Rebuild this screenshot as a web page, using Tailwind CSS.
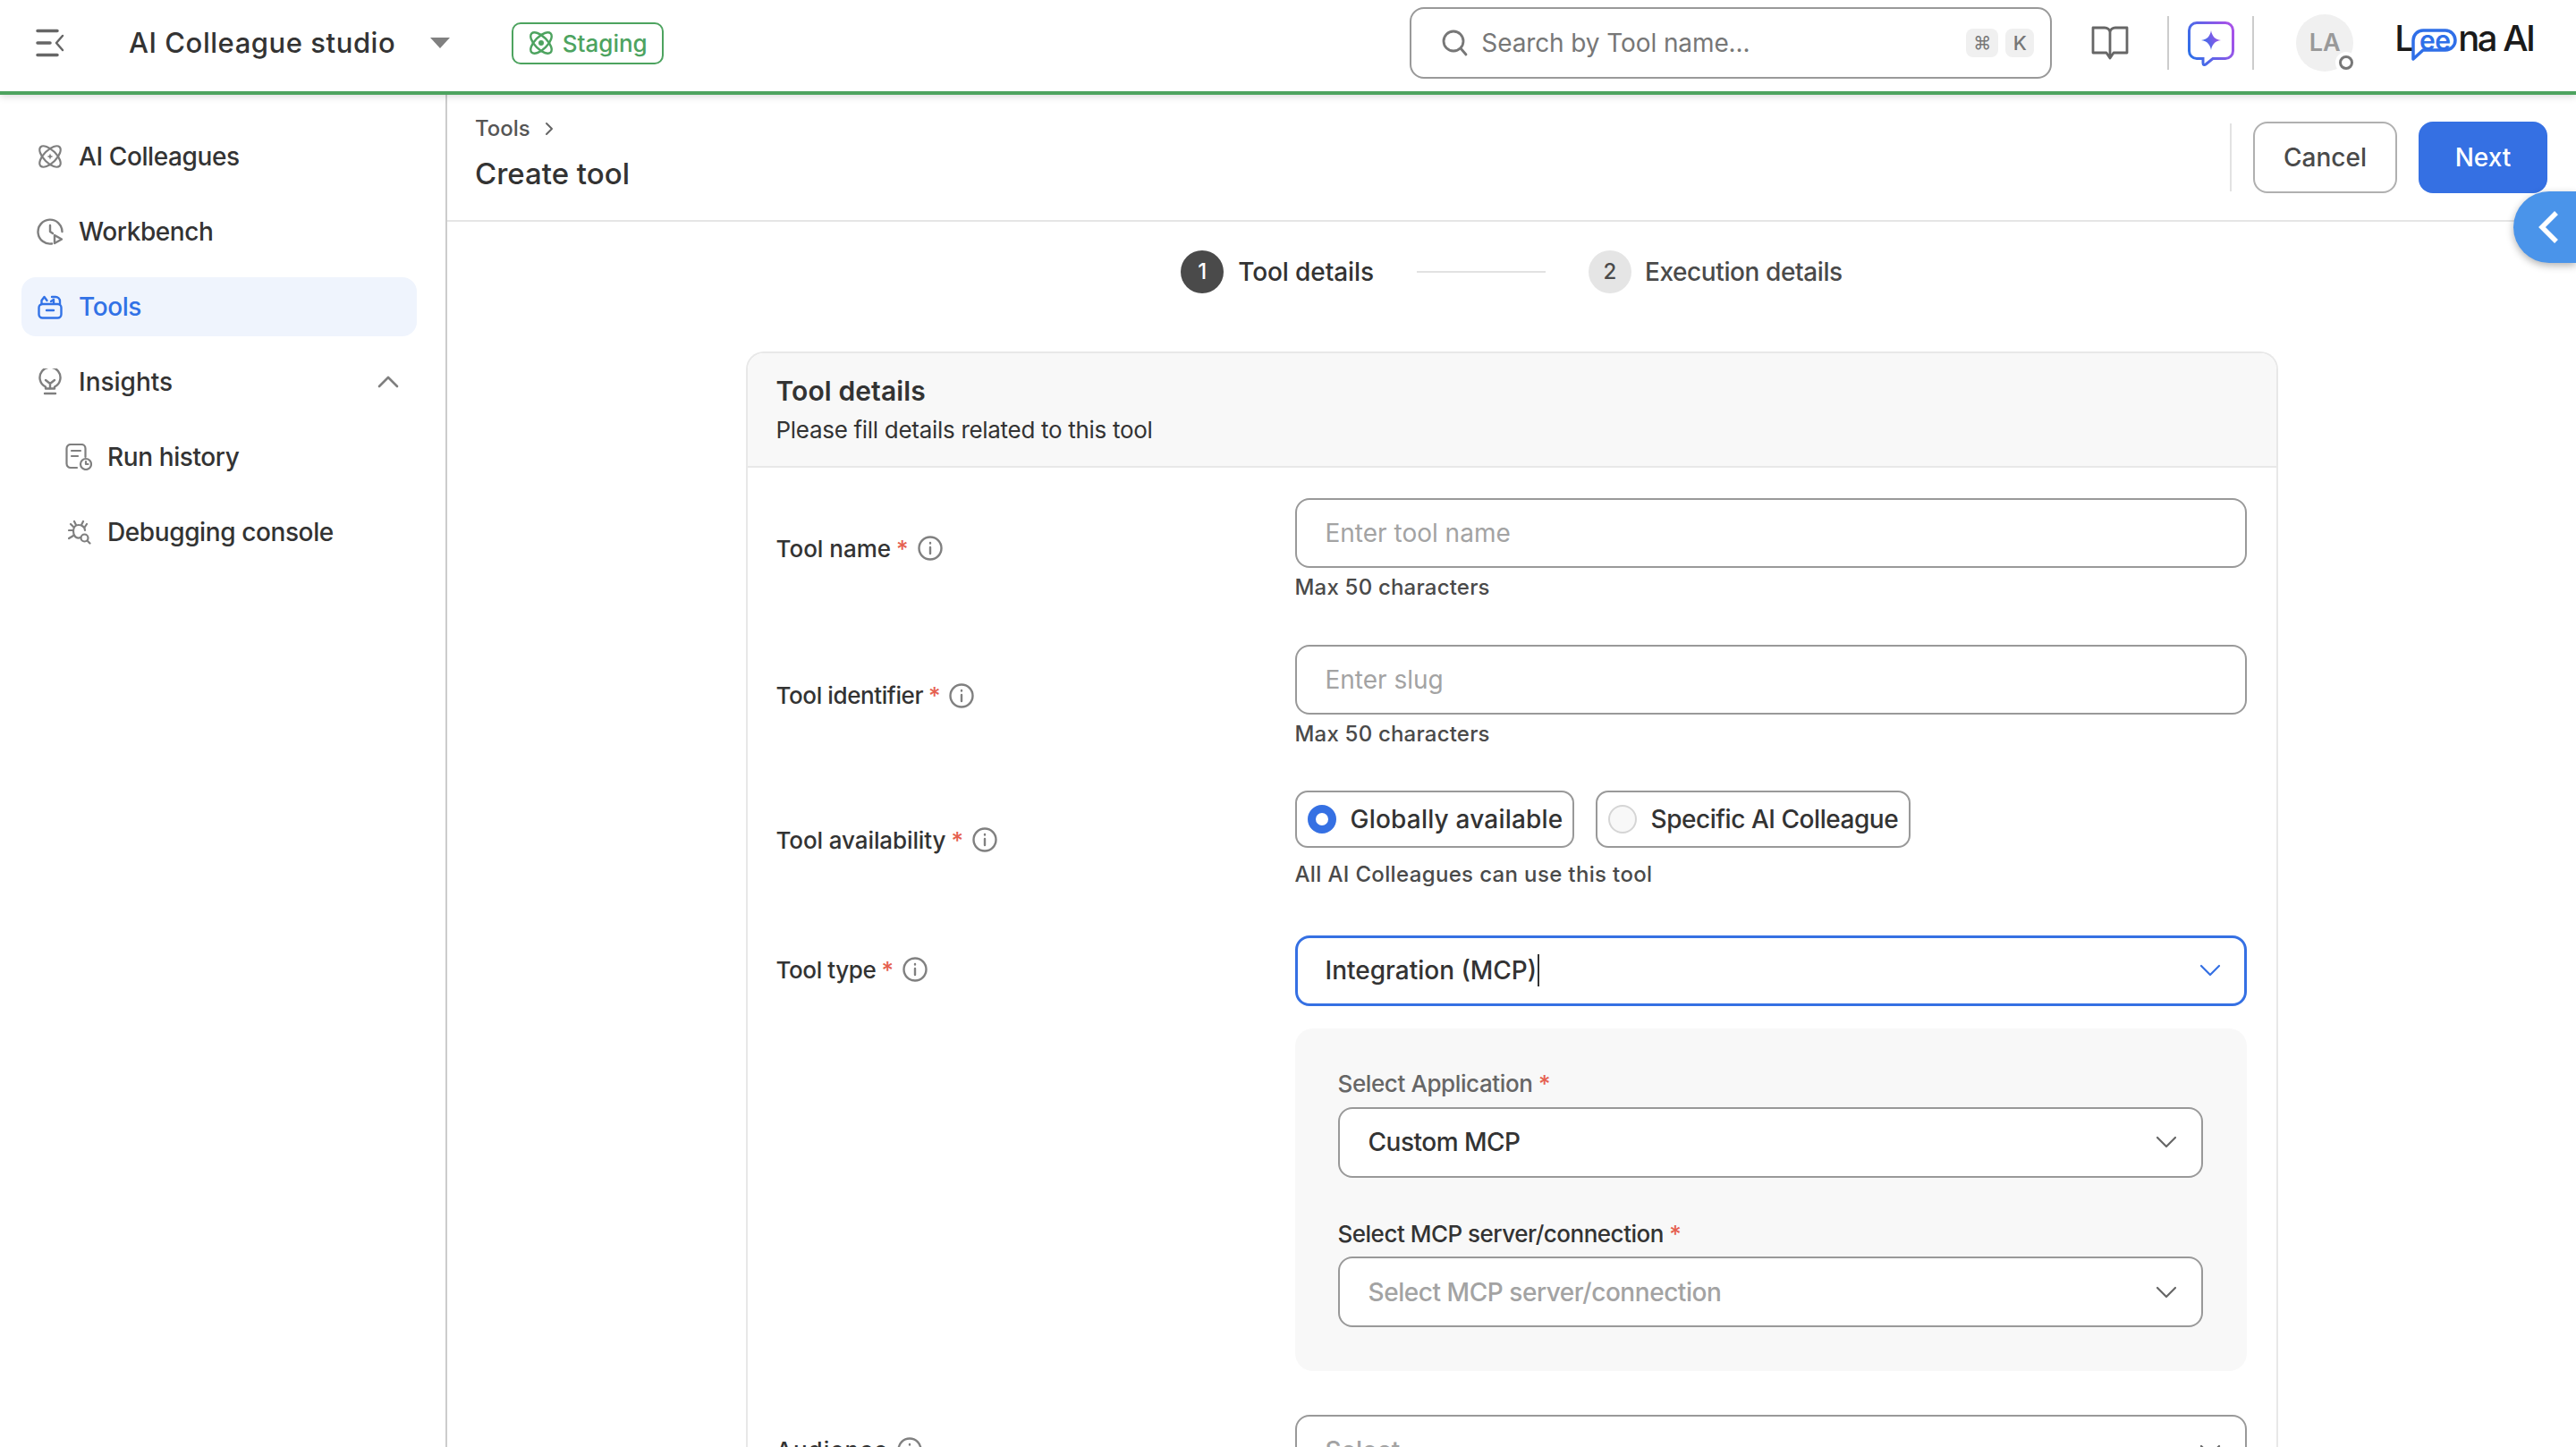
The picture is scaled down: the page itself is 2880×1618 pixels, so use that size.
<!DOCTYPE html>
<html lang="en">
<head>
<meta charset="UTF-8">
<title>Create tool</title>
<script src="https://cdn.jsdelivr.net/npm/@tailwindcss/browser@4"></script>
</head>
<body class="h-[1618px] w-[2880px] overflow-hidden bg-white font-[Inter,sans-serif] text-[#333]">

<!-- top bar -->
<header class="relative z-10 flex h-[106px] items-center border-b-4 border-[#4da35f] bg-white pb-[6px] shadow-[0_2px_8px_rgba(0,0,0,0.15)]">
  <svg class="ml-[40px] h-[32px] w-[32px]" viewBox="0 0 32 32" fill="none" stroke="#666" stroke-width="3.5" stroke-linecap="round" stroke-linejoin="round"><path d="M2 2.5h22M2 16h14M2 29.5h22"/><path stroke-width="2.5" d="M30 8l-7 8 7 8"/></svg>
  <span class="ml-[72px] text-[31px] font-medium tracking-[0.55px]">AI Colleague studio</span>
  <svg class="ml-[39px] h-[12px] w-[22px]" viewBox="0 0 22 12"><path d="M0 0h22L11 12z" fill="#808080"/></svg>
  <div class="ml-[69px] flex h-[47px] w-[170px] items-center justify-center gap-[10px] rounded-[10px] border-2 border-[#4da35f] text-[26px] font-medium text-[#4da35f]">
    <svg class="h-[28px] w-[28px]" viewBox="0 0 28 28" fill="none" stroke="#4da35f" stroke-width="2.4"><ellipse cx="14" cy="14" rx="7" ry="15" transform="rotate(45 14 14)"/><ellipse cx="14" cy="14" rx="7" ry="15" transform="rotate(-45 14 14)"/><circle cx="14" cy="14" r="1.8" fill="#4da35f"/></svg>
    Staging
  </div>
  <div class="ml-[834px] flex h-[80px] w-[718px] items-center rounded-[16px] border-2 border-[#999] pl-[34px] pr-[18px]">
    <svg class="h-[30px] w-[30px]" viewBox="0 0 30 30" fill="none" stroke="#777" stroke-width="2.8" stroke-linecap="round"><circle cx="13" cy="13" r="11"/><path d="M21 21l6 7"/></svg>
    <span class="ml-[14px] text-[28px] tracking-[-0.1px] text-[#777]">Search by Tool name...</span>
    <span class="ml-auto flex h-[32px] w-[36px] items-center justify-center rounded-[8px] bg-[#f0f0f0] text-[20px] text-[#777]">⌘</span>
    <span class="ml-[8px] flex h-[32px] w-[32px] items-center justify-center rounded-[8px] bg-[#f0f0f0] text-[22px] font-medium text-[#777]">K</span>
  </div>
  <svg class="ml-[44px] h-[38px] w-[42px]" viewBox="0 0 42 38" fill="none" stroke="#666" stroke-width="2.8" stroke-linejoin="round"><path d="M2 2h13c3 0 6 2 6 5 0-3 3-5 6-5h13v28H25l-4 6-4-6H2zM21 7v29"/></svg>
  <div class="ml-[43px] h-[60px] w-[2px] bg-[#ccc]"></div>
  <svg class="ml-[21px] mt-[2px] h-[50px] w-[52px]" viewBox="0 0 52 50" fill="none"><defs><linearGradient id="g1" x1="0" y1="0.7" x2="1" y2="0.3"><stop offset="0" stop-color="#2f6fe8"/><stop offset="1" stop-color="#a552e8"/></linearGradient></defs><path d="M10 1.500h32a8.500 8.500 0 0 1 8.500 8.500v23a8.500 8.500 0 0 1-8.500 8.500H28l-8 6.500c-1.500 1-3 .5-3-1.500v-5H10a8.500 8.500 0 0 1-8.500-8.500V10A8.500 8.500 0 0 1 10 1.500z" stroke="url(#g1)" stroke-width="3"/><path d="M26 10c1 6 4 10 11 11-7 1-10 5-11 11-1-6-4-10-11-11 7-1 10-5 11-11z" fill="url(#g1)"/></svg>
  <div class="ml-[20px] h-[60px] w-[2px] bg-[#ccc]"></div>
  <div class="relative ml-[47px] flex h-[64px] w-[64px] items-center justify-center rounded-full bg-[#f0f0f0] text-[27px] font-semibold text-[#999]">
    LA
    <span class="absolute bottom-[-2px] right-[-4px] h-[24px] w-[24px] rounded-full bg-white p-[4px]"><span class="block h-[16px] w-[16px] rounded-full border-[3px] border-[#777]"></span></span>
  </div>
  <div class="relative ml-[46px] flex h-[44px] w-[156px] items-center pb-[10px] text-[40px] font-medium text-[#1a1a1a]">
    <span class="w-[18px]">L</span>
    <span class="relative top-[2px] ml-[2px] flex h-[26px] w-[50px] items-center justify-center text-[30px] font-semibold tracking-[-0.5px] text-[#2f6fe8]">ee</span>
    <span class="ml-[1px] tracking-[-2.5px]">na AI</span>
    <svg class="absolute left-[18px] top-[6px] h-[38px] w-[52px]" viewBox="0 0 52 38" fill="none" stroke="#2f6fe8" stroke-width="3.500" stroke-linejoin="round"><path d="M14 2h25a11 11 0 0 1 0 22H14l-11 10V13A11 11 0 0 1 14 2z"/></svg>
  </div>
</header>

<div class="flex h-[1512px]">
  <!-- sidebar -->
  <aside class="w-[500px] shrink-0 border-r-2 border-[#ccc] pl-[24px] pr-[32px] pt-[36px]">
    <nav class="flex flex-col gap-[18px] text-[28px] font-medium tracking-[-0.4px]">
      <a class="flex h-[66px] items-center gap-[18px] pl-[18px]">
        <svg class="h-[28px] w-[28px]" viewBox="0 0 28 28" fill="none" stroke="#7f7f7f" stroke-width="2.2"><ellipse cx="14" cy="14" rx="7" ry="15" transform="rotate(45 14 14)"/><ellipse cx="14" cy="14" rx="7" ry="15" transform="rotate(-45 14 14)"/><path d="M14 10.500l1 2.500 2.500 1-2.500 1-1 2.500-1-2.500-2.500-1 2.500-1z" fill="#7f7f7f" stroke="none"/></svg>
        AI Colleagues
      </a>
      <a class="flex h-[66px] items-center gap-[17px] pl-[17px]">
        <svg class="h-[30px] w-[30px]" viewBox="0 0 30 30" fill="none" stroke="#7f7f7f" stroke-width="2.4" stroke-linecap="round" stroke-linejoin="round"><path d="M17 28.500A13.500 13.500 0 1 1 28.500 15"/><path d="M15 8v7l3 2"/><path d="M20 19l8 4.500-8 4.500z"/></svg>
        Workbench
      </a>
      <a class="flex h-[66px] items-center gap-[18px] rounded-[16px] bg-[#eff4fd] pl-[18px] text-[#3272e6]">
        <svg class="h-[28px] w-[28px]" viewBox="0 0 28 28" fill="none" stroke="#3272e6" stroke-width="2.4" stroke-linecap="round" stroke-linejoin="round"><rect x="1.500" y="11" width="25" height="15.500" rx="4"/><path d="M10 18h8"/><path d="M4.500 11V7l3-4 3 4M16 3h4a5 5 0 0 1 5 5v3M15 8l3-2v4"/></svg>
        Tools
      </a>
      <a class="flex h-[66px] items-center pl-[19px] pr-[20px] tracking-normal">
        <svg class="mr-[19px] h-[30px] w-[26px]" viewBox="0 0 26 30" fill="none" stroke="#7f7f7f" stroke-width="2.4" stroke-linecap="round" stroke-linejoin="round"><path d="M8 22.500v-2A11.500 11.500 0 1 1 18 20.500v2z"/><path d="M8 13l5 4 5-4M13 17v5M7 28h12"/></svg>
        Insights
        <svg class="ml-auto h-[14px] w-[24px]" viewBox="0 0 24 14" fill="none" stroke="#7f7f7f" stroke-width="2.6" stroke-linecap="round" stroke-linejoin="round"><path d="M2 12L12 2l10 10"/></svg>
      </a>
      <a class="flex h-[66px] items-center gap-[17px] pl-[49px]">
        <svg class="h-[30px] w-[30px]" viewBox="0 0 30 30" fill="none" stroke="#7f7f7f" stroke-width="2.2" stroke-linecap="round" stroke-linejoin="round"><path d="M13 27H6a4.500 4.500 0 0 1-4.500-4.500v-17A4.500 4.500 0 0 1 6 1h12a4.500 4.500 0 0 1 4.500 4.500V15"/><path d="M7 8h10M7 14h7"/><circle cx="23" cy="23" r="6"/><path d="M23 20v3h2.500"/></svg>
        Run history
      </a>
      <a class="flex h-[66px] items-center gap-[18px] pl-[52px]">
        <svg class="h-[28px] w-[26px]" viewBox="0 0 26 28" fill="none" stroke="#7f7f7f" stroke-width="2.2" stroke-linecap="round" stroke-linejoin="round"><path d="M14 20c-5 2-8-2-8-7s3-7 6-7 7 2 7 6"/><path d="M9 6L7 2M15 6l2-4M6 12H1M6 18l-5 3M3 5l3 3M21 5l-2 3"/><circle cx="18.500" cy="20.500" r="4"/><path d="M21.500 23.500l3 3"/></svg>
        Debugging console
      </a>
    </nav>
  </aside>

  <!-- main -->
  <main class="relative min-w-0 flex-1">
    <div class="flex h-[142px] items-center justify-between border-b-2 border-[#e5e5e5] pl-[31px] pr-[32px]">
      <div class="pb-[8px]">
        <div class="flex items-center gap-[16px] text-[24px] font-medium leading-[32px] text-[#555]">
          Tools
          <svg class="h-[16px] w-[10px]" viewBox="0 0 10 16" fill="none" stroke="#666" stroke-width="2" stroke-linecap="round" stroke-linejoin="round"><path d="M2 2l6 6-6 6"/></svg>
        </div>
        <h1 class="mt-[12px] text-[33px] font-medium leading-[44px]">Create tool</h1>
      </div>
      <div class="flex items-center">
        <div class="h-[76px] w-[2px] bg-[#e2e2e2]"></div>
        <button class="ml-[24px] h-[80px] w-[161px] rounded-[16px] border-2 border-[#b0b0b0] text-[28px] font-medium text-[#4a4a4a]">Cancel</button>
        <button class="ml-[24px] h-[80px] w-[144px] rounded-[16px] bg-[#3570e3] text-[28px] font-medium text-white">Next</button>
      </div>
    </div>

    <div class="absolute right-0 top-[108px] flex h-[80px] w-[70px] items-center justify-center rounded-l-[40px] bg-[#4a94ea] pl-[8px] shadow-[0_3px_8px_rgba(0,0,0,0.3)]">
      <svg class="h-[36px] w-[22px]" viewBox="0 0 22 36" fill="none" stroke="#fff" stroke-width="5.500"><path d="M20 2L4 18l16 16"/></svg>
    </div>

    <!-- stepper -->
    <div class="flex h-[112px] items-center justify-center text-[28px] font-medium">
      <span class="flex h-[48px] w-[48px] items-center justify-center rounded-full bg-[#4a4a4a] text-[24px] text-white">1</span>
      <span class="ml-[16px] tracking-[-0.1px]">Tool details</span>
      <span class="mx-[48px] h-[2px] w-[144px] bg-[#e2e2e2]"></span>
      <span class="flex h-[48px] w-[48px] items-center justify-center rounded-full bg-[#e5e5e5] text-[24px] text-[#4a4a4a]">2</span>
      <span class="ml-[15px] tracking-[-0.4px] text-[#4a4a4a]">Execution details</span>
    </div>

    <!-- card -->
    <section class="mx-auto mt-[33px] w-[1713px] rounded-t-[20px] border-2 border-b-0 border-[#e8e8e8]">
      <div class="h-[128px] rounded-t-[18px] border-b-2 border-[#e8e8e8] bg-[#f8f8f8] pl-[32px] pt-[22px]">
        <h2 class="text-[30px] font-semibold leading-[40px] tracking-[0.1px]">Tool details</h2>
        <p class="mt-[6px] text-[26px] leading-[36px] tracking-[-0.3px]">Please fill details related to this tool</p>
      </div>

      <div class="pl-[32px] pt-[34px]">
        <div class="mb-[48px] grid grid-cols-[580px_1064px] items-center">
          <label class="flex items-center pb-[4px] text-[26px] font-medium">Tool name<span class="ml-[6px] text-[#e5604f]">*</span>
            <svg class="ml-[10px] h-[28px] w-[28px]" viewBox="0 0 28 28" fill="none" stroke="#808080" stroke-width="2.4" stroke-linecap="round"><circle cx="14" cy="14" r="12.500"/><path d="M14 13v7M14 8v.5"/></svg>
          </label>
          <div>
            <div class="flex h-[78px] items-center rounded-[16px] border-2 border-[#999] px-[32px] text-[28px] text-[#a3a3a3]">Enter tool name</div>
            <p class="mt-[6px] text-[24px] font-medium leading-[32px] tracking-[0.2px] text-[#4a4a4a]">Max 50 characters</p>
          </div>
        </div>

        <div class="mb-[47px] grid grid-cols-[580px_1064px] items-center">
          <label class="flex items-center pb-[3px] text-[26px] font-medium tracking-[-0.4px]">Tool identifier<span class="ml-[6px] text-[#e5604f]">*</span>
            <svg class="ml-[10px] h-[28px] w-[28px]" viewBox="0 0 28 28" fill="none" stroke="#808080" stroke-width="2.4" stroke-linecap="round"><circle cx="14" cy="14" r="12.500"/><path d="M14 13v7M14 8v.5"/></svg>
          </label>
          <div>
            <div class="flex h-[78px] items-center rounded-[16px] border-2 border-[#999] px-[32px] text-[28px] text-[#a3a3a3]">Enter slug</div>
            <p class="mt-[6px] text-[24px] font-medium leading-[32px] tracking-[0.2px] text-[#4a4a4a]">Max 50 characters</p>
          </div>
        </div>

        <div class="mb-[52px] grid grid-cols-[580px_1064px] items-center">
          <label class="flex items-center text-[26px] font-medium tracking-[-0.1px]">Tool availability<span class="ml-[6px] text-[#e5604f]">*</span>
            <svg class="ml-[10px] h-[28px] w-[28px]" viewBox="0 0 28 28" fill="none" stroke="#808080" stroke-width="2.4" stroke-linecap="round"><circle cx="14" cy="14" r="12.500"/><path d="M14 13v7M14 8v.5"/></svg>
          </label>
          <div>
            <div class="flex gap-[24px] text-[28px] font-medium">
              <div class="flex h-[64px] w-[312px] items-center rounded-[14px] border-2 border-[#999] pl-[12px]">
                <span class="h-[32px] w-[32px] rounded-full border-[9px] border-[#3570e3] bg-white"></span>
                <span class="ml-[16px] tracking-[0.2px]">Globally available</span>
              </div>
              <div class="flex h-[64px] w-[352px] items-center rounded-[14px] border-2 border-[#999] pl-[12px]">
                <span class="h-[32px] w-[32px] rounded-full border-2 border-[#d5d5d5] bg-[#f8f8f8]"></span>
                <span class="ml-[16px] tracking-[-0.45px]">Specific AI Colleague</span>
              </div>
            </div>
            <p class="mt-[14px] text-[24px] font-medium leading-[32px] tracking-[0.35px] text-[#4a4a4a]">All AI Colleagues can use this tool</p>
          </div>
        </div>

        <div class="grid grid-cols-[580px_1064px] items-start">
          <label class="flex h-[78px] items-center pb-[2px] text-[26px] font-medium tracking-[-0.4px]">Tool type<span class="ml-[6px] text-[#e5604f]">*</span>
            <svg class="ml-[10px] h-[28px] w-[28px]" viewBox="0 0 28 28" fill="none" stroke="#808080" stroke-width="2.4" stroke-linecap="round"><circle cx="14" cy="14" r="12.500"/><path d="M14 13v7M14 8v.5"/></svg>
          </label>
          <div>
            <div class="flex h-[79px] items-center rounded-[16px] border-[3px] border-[#3570e3] px-[31px] pb-[2px] text-[28px] font-medium">
              Integration (MCP)<span class="ml-[1px] h-[36px] w-[2px] bg-[#333]"></span>
              <svg class="ml-auto mr-[-5px] h-[14px] w-[24px]" viewBox="0 0 24 14" fill="none" stroke="#3570e3" stroke-width="2.2" stroke-linecap="round" stroke-linejoin="round"><path d="M2 2l10 10L22 2"/></svg>
            </div>

            <div class="mt-[25px] rounded-[20px] bg-[#f8f8f8] pb-[49px] pl-[48px] pr-[49px] pt-[46px]">
              <p class="text-[26px] font-medium leading-[32px] tracking-[-0.4px] text-[#666]">Select Application <span class="text-[#e5604f]">*</span></p>
              <div class="mt-[10px] flex h-[79px] items-center rounded-[16px] border-2 border-[#999] bg-white px-[32px] pb-[2px] text-[28px] font-medium tracking-[-0.5px]">
                Custom MCP
                <svg class="ml-auto mr-[-5px] h-[14px] w-[24px]" viewBox="0 0 24 14" fill="none" stroke="#666" stroke-width="2.2" stroke-linecap="round" stroke-linejoin="round"><path d="M2 2l10 10L22 2"/></svg>
              </div>
              <p class="mt-[47px] text-[26px] font-medium leading-[32px] tracking-[-0.5px]">Select MCP server/connection <span class="text-[#e5604f]">*</span></p>
              <div class="mt-[9px] flex h-[79px] items-center rounded-[16px] border-2 border-[#999] bg-white px-[32px] text-[28px] font-medium tracking-[-0.45px] text-[#a3a3a3]">
                Select MCP server/connection
                <svg class="ml-auto mr-[-5px] h-[14px] w-[24px]" viewBox="0 0 24 14" fill="none" stroke="#666" stroke-width="2.2" stroke-linecap="round" stroke-linejoin="round"><path d="M2 2l10 10L22 2"/></svg>
              </div>
            </div>
          </div>
        </div>

        <div class="mt-[49px] grid grid-cols-[580px_1064px] items-start">
          <label class="flex h-[78px] items-center text-[26px] font-medium tracking-[1px]">Audience
            <svg class="ml-[10px] h-[28px] w-[28px]" viewBox="0 0 28 28" fill="none" stroke="#808080" stroke-width="2.4" stroke-linecap="round"><circle cx="14" cy="14" r="12.500"/><path d="M14 13v7M14 8v.5"/></svg>
          </label>
          <div class="flex h-[79px] items-center rounded-[16px] border-2 border-[#999] px-[32px] text-[28px] font-medium text-[#a3a3a3]">
            Select
            <svg class="ml-auto mr-[-5px] h-[14px] w-[24px]" viewBox="0 0 24 14" fill="none" stroke="#666" stroke-width="2.2" stroke-linecap="round" stroke-linejoin="round"><path d="M2 2l10 10L22 2"/></svg>
          </div>
        </div>
      </div>
    </section>
  </main>
</div>
</body>
</html>
